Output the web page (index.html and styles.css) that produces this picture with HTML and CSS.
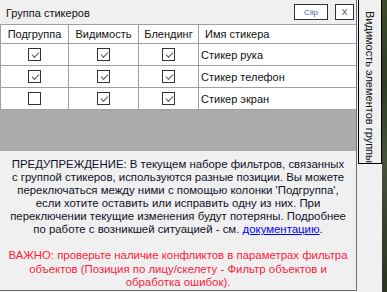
FILE: index.html
```html
<!DOCTYPE html>
<html>
<head>
<meta charset="utf-8">
<link rel="stylesheet" href="styles.css">
</head>
<body>
<div class="screen">
  <div class="panel">
    <div class="titlebar">
      <span class="title">Группа стикеров</span>
      <div class="buttons">
        <button class="btn clip">Clip</button>
        <button class="btn close">X</button>
      </div>
    </div>
    <div class="grid">
      <div class="row head">
        <div class="cell center">Подгруппа</div>
        <div class="cell center">Видимость</div>
        <div class="cell center">Блендинг</div>
        <div class="cell name-head">Имя стикера</div>
      </div>
      <div class="row">
        <div class="cell center"><span class="cb on"></span></div>
        <div class="cell center"><span class="cb on"></span></div>
        <div class="cell center"><span class="cb on"></span></div>
        <div class="cell name">Стикер рука</div>
      </div>
      <div class="row">
        <div class="cell center"><span class="cb on"></span></div>
        <div class="cell center"><span class="cb on"></span></div>
        <div class="cell center"><span class="cb on"></span></div>
        <div class="cell name">Стикер телефон</div>
      </div>
      <div class="row">
        <div class="cell center"><span class="cb"></span></div>
        <div class="cell center"><span class="cb on"></span></div>
        <div class="cell center"><span class="cb on"></span></div>
        <div class="cell name">Стикер экран</div>
      </div>
    </div>
    <div class="empty"></div>
    <div class="notes">
      <p class="warn">ПРЕДУПРЕЖДЕНИЕ: В текущем наборе фильтров, связанных<br>с группой стикеров, используются разные позиции. Вы можете<br>переключаться между ними с помощью колонки 'Подгруппа',<br>если хотите оставить или исправить одну из них. При<br>переключении текущие изменения будут потеряны. Подробнее<br>по работе с возникшей ситуацией - см. <a href="#">документацию</a>.</p>
      <p class="important">ВАЖНО: проверьте наличие конфликтов в параметрах фильтра<br>объектов (Позиция по лицу/скелету - Фильтр объектов и<br>обработка ошибок).</p>
    </div>
  </div>
  <div class="side">
    <div class="tab">Видимость элементов группы</div>
  </div>
  <div class="scene"></div>
</div>
</body>
</html>
```
FILE: styles.css
```css
html, body {
  margin: 0;
  padding: 0;
  background: #f0f0f0;
}
body {
  font-family: "Liberation Sans", Arial, sans-serif;
  font-size: 11px;
  color: #000;
}
.screen {
  display: flex;
  width: 387px;
  height: 292px;
  overflow: hidden;
}
.panel {
  width: 357px;
  height: 291px;
  box-sizing: border-box;
  border-right: 1px solid #6d6d6d;
  border-bottom: 1px solid #6d6d6d;
  display: flex;
  flex-direction: column;
  background: #f0f0f0;
}
.titlebar {
  height: 24px;
  display: flex;
  align-items: flex-start;
  justify-content: space-between;
  padding: 0 2px 0 6px;
}
.title {
  font-size: 11px;
  line-height: 14px;
  padding-top: 6px;
  color: #111;
}
.buttons {
  display: flex;
  gap: 7px;
  padding-top: 4px;
}
.btn {
  height: 16px;
  box-sizing: border-box;
  border: 1px solid #333;
  background: #fff;
  font-family: "Liberation Sans", Arial, sans-serif;
  font-size: 8px;
  padding: 0;
  line-height: 13px;
}
.clip {
  width: 34px;
  color: #4a6590;
}
.close {
  width: 19px;
  color: #5a4a70;
  font-size: 9px;
}
.grid {
  border-top: 1px solid #a0a0a0;
  border-left: 1px solid #a0a0a0;
  background: #fff;
}
.row {
  display: grid;
  grid-template-columns: 68px 70px 60px 1fr;
  height: 22px;
  box-sizing: border-box;
  border-bottom: 1px solid #a0a0a0;
}
.row.head {
  height: 19px;
}
.cell {
  box-sizing: border-box;
  border-right: 1px solid #a0a0a0;
  display: flex;
  align-items: center;
  white-space: nowrap;
  color: #111;
  font-size: 11px;
}
.cell:last-child {
  border-right: none;
}
.center {
  justify-content: center;
}
.name-head {
  padding-left: 6px;
}
.name {
  padding-left: 2px;
}
.cb {
  width: 13px;
  height: 13px;
  box-sizing: border-box;
  border: 1px solid #333;
  background: #fff;
  position: relative;
}
.cb.on::after {
  content: "";
  position: absolute;
  left: 3px;
  top: 1px;
  width: 6px;
  height: 3px;
  border-left: 1px solid #555;
  border-bottom: 1px solid #555;
  transform: translate(0, 2px) rotate(-45deg);
  transform-origin: center;
}
.empty {
  height: 41px;
  background: #ababab;
}
.notes {
  flex: 1;
  padding-top: 7px;
  text-align: center;
  line-height: 13px;
  font-size: 11.4px;
  white-space: nowrap;
}
.notes p {
  margin: 0;
}
.warn {
  color: #10102a;
}
.warn a {
  color: #0000ff;
  text-decoration: underline;
}
.important {
  margin-top: 13px !important;
  color: #ff1a3c;
  line-height: 13.5px;
}
.side {
  width: 25px;
  background: #f0f0f0;
  padding-left: 1px;
  box-sizing: border-box;
}
.tab {
  width: 24px;
  height: 164px;
  box-sizing: border-box;
  border: 1px solid #000;
  border-top: none;
  background: #f0f0f0;
  writing-mode: vertical-rl;
  padding-top: 11px;
  line-height: 22px;
  white-space: nowrap;
  color: #111;
  font-size: 11px;
}
.scene {
  flex: 1;
  background: linear-gradient(180deg, #3d4a2c 0%, #2f3b22 30%, #46523a 55%, #34402a 80%, #2c3320 100%);
}
```
